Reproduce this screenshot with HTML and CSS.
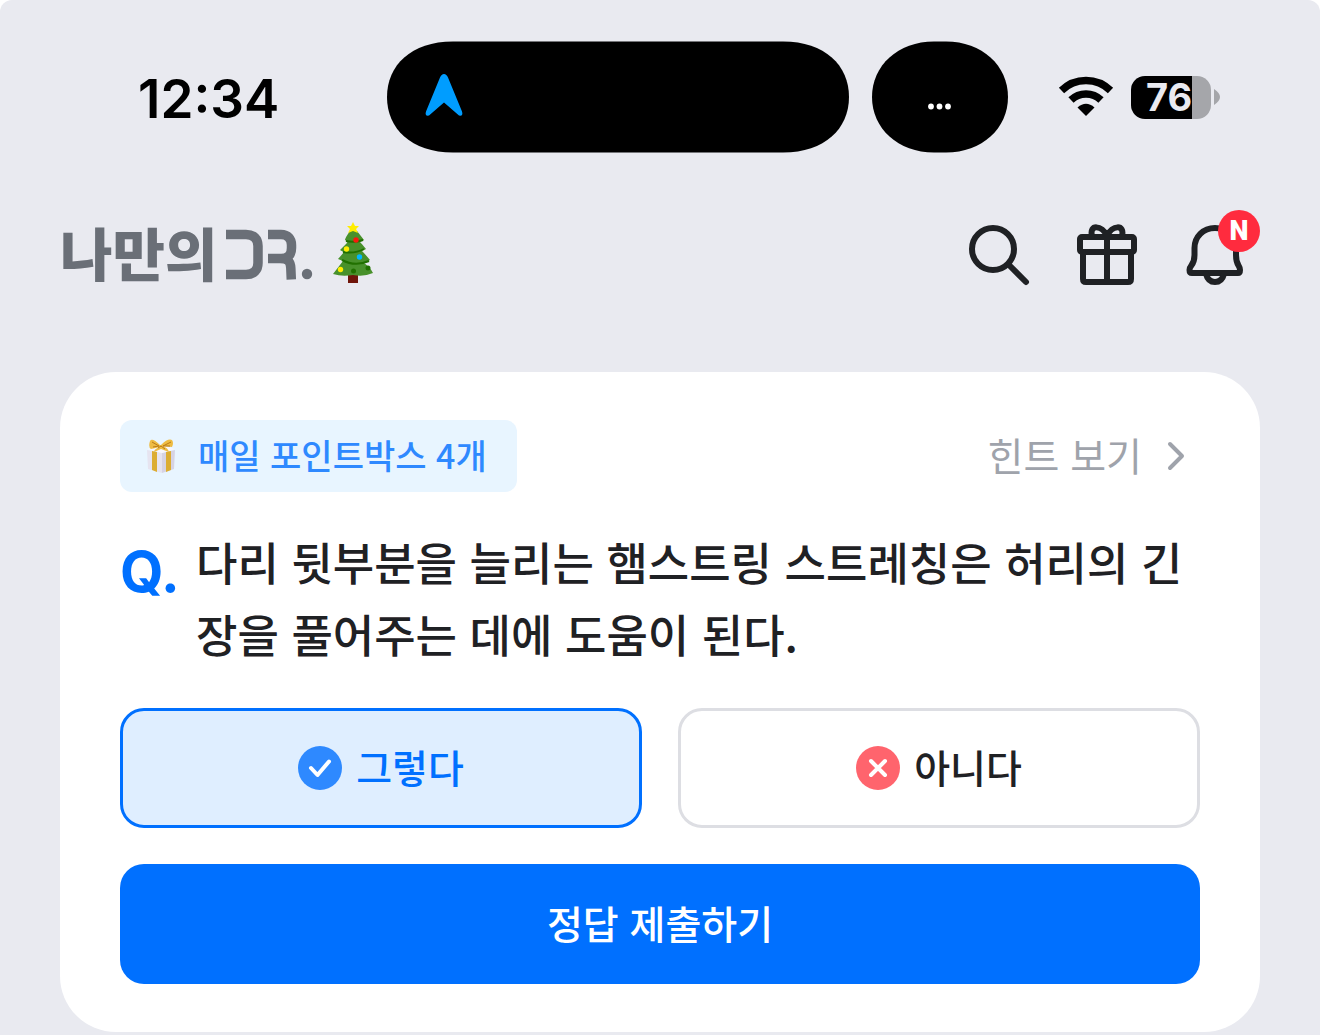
FILE: index.html
```html
<!DOCTYPE html>
<html lang="ko">
<head>
<meta charset="utf-8">
<meta name="viewport" content="width=device-width, initial-scale=1">
<title>나만의DR.</title>
<link rel="stylesheet" href="styles.css">
</head>
<body>
<div class="screen">
  <div class="status">
    <time class="clock">12:34</time>
    <div class="islands">
      <svg class="island-main" viewBox="0 0 462 111" aria-hidden="true">
        <path d="M66 0H396C438 0 462 24 462 55.500S438 111 396 111H66C24 111 0 87 0 55.500S24 0 66 0Z"/>
        <path fill="#009dff" d="M53 36Q54.500 32.500 57 32.500T61 36L75 70Q76.500 75 72 74L57 61L42 74Q37.500 75 39 70Z"/>
      </svg>
      <svg class="island-side" viewBox="0 0 136 111" role="img" aria-label="더보기">
        <path d="M62 0H74C110 0 136 24 136 55.500S110 111 74 111H62C26 111 0 87 0 55.500S26 0 62 0Z"/>
        <g fill="#fff"><circle cx="59" cy="65" r="2.900"/><circle cx="67.500" cy="65" r="2.900"/><circle cx="76" cy="65" r="2.900"/></g>
      </svg>
    </div>
    <div class="signals">
      <svg class="wifi" viewBox="0 0 56 42" role="img" aria-label="Wi-Fi">
        <g fill="none" stroke="#000" stroke-width="7.500">
          <path d="M3.500 14.500A35 35 0 0 1 52.500 14.500"/>
          <path d="M13 24A21.500 21.500 0 0 1 43 24"/>
        </g>
        <path d="M19.500 31.500Q28 24 36.500 31.500L28 40Z"/>
      </svg>
      <div class="battery"><span class="level">76</span></div>
      <svg class="cap" viewBox="0 0 6 16" aria-hidden="true"><path fill="#a5a6aa" d="M0 0Q6 4 6 8T0 16Z"/></svg>
    </div>
  </div>

  <header class="header">
    <a class="brand" href="#" aria-label="나만의DR. 홈">
      <span class="brand-name">나만의</span>
      <svg class="brand-mark" viewBox="0 0 90 54" aria-hidden="true">
        <g fill="none" stroke="#6a6f77" stroke-width="9.500">
          <path d="M1 6.500H21C29 6.500 33 11 33 18V35C33 42 29 46.500 21 46.500H1"/>
          <path d="M43 6.500H56C63 6.500 66.500 11 66.500 17V20C66.500 27 63 30.500 56 30.500H43M55 30.500C63 30.500 65.500 33 65.800 40L66.300 51.500"/>
        </g>
        <circle cx="82" cy="46" r="5.200" fill="#6a6f77"/>
      </svg>
      <svg class="tree" viewBox="0 0 42 62" aria-hidden="true">
        <path fill="#70150a" d="M15 51H25V61H15Z"/>
        <path fill="#48912b" d="M17 9Q12 16 12 18Q16 20 13 22L7 28Q10 30 11 30Q7 35 5 37L10 39L0 52Q9 55 20 53Q31 55 40 51Q37 45 31 41L37 38Q32 32 29 29L33 27Q29 22 27 20L31 18L24 9Z"/>
        <g fill="none" stroke="#217000" stroke-width="2"><path d="M13 19Q21 21 30 18"/><path d="M10 30Q22 32 31 27"/><path d="M9 38Q22 45 36 39"/></g>
        <path fill="#ffed00" d="M20 0L22 4H26L23 7L25 11L20 9L15 11L17 7L14 4H18Z"/>
        <circle cx="23" cy="18" r="2.700" fill="#f71b0d"/><circle cx="13.500" cy="27" r="2.700" fill="#ffed00"/>
        <circle cx="26.500" cy="35" r="2.700" fill="#00b7ff"/><circle cx="7.500" cy="47.500" r="2.700" fill="#ffed00"/>
        <circle cx="20.500" cy="49" r="2.500" fill="#217000"/><circle cx="35" cy="46" r="2.500" fill="#217000"/>
      </svg>
    </a>
    <nav class="actions" aria-label="바로가기">
      <button class="icon-button" type="button" aria-label="검색">
        <svg viewBox="0 0 72 72"><circle cx="30" cy="30" r="21"/><path d="M46 46L63 63"/></svg>
      </button>
      <button class="icon-button" type="button" aria-label="선물">
        <svg viewBox="0 0 72 72"><rect x="9" y="18" width="54" height="15" rx="2"/><path d="M12 33V60Q12 63 15 63H57Q60 63 60 60V33M36 18V63M21 17C18 5 31 6 36 17C41 6 54 5 51 17"/></svg>
      </button>
      <button class="icon-button" type="button" aria-label="새 알림">
        <svg viewBox="0 0 72 72"><path d="M36 9C24 9 15.500 18 15.500 29V36C15.500 47 10.500 46 10.500 51Q10.500 54 13 54H59Q61 54 61 51C61 46 57 47 57 36V29C57 18 48 9 36 9Z"/><path d="M27 55Q29 63 36 63T45 55"/></svg>
        <span class="badge">N</span>
      </button>
    </nav>
  </header>

  <main class="card">
    <div class="card-top">
      <div class="chip">
        <svg class="gift" viewBox="0 0 30 36" aria-hidden="true">
          <path fill="#e6e4f0" d="M1 12L16 15V35L2 31Z"/><path fill="#d6d3e3" d="M16 15L29 12L28 31L16 35Z"/>
          <path fill="#f8f7fc" d="M1 11L15 7L29 11L16 15Z"/>
          <path fill="#dcad32" d="M6 13L11 14V34L6 32ZM20 14L25 13V32L20 34Z"/>
          <path fill="#eebc43" d="M14 7Q6-1 4 3Q2 9 5 11L14 9Q8 11 8 14L15 11L23 14Q22 10 17 8L26 9Q28 5 26 2Q22 0 15 7Z"/>
          <path fill="none" stroke="#b97b16" d="M6 4L13 8L7 9M25 4L17 8L24 8M12 10L15 8L19 11"/>
        </svg>
        <span class="label">매일 포인트박스 4개</span>
      </div>
      <a class="hint" href="#">
        <span class="label">힌트 보기</span>
        <svg class="chevron" viewBox="0 0 20 32" aria-hidden="true"><path d="M4 4L16 16L4 28"/></svg>
      </a>
    </div>
    <form class="quiz">
      <div class="question">
        <span class="q">Q.</span>
        <p class="question-text">다리 뒷부분을 늘리는 햄스트링 스트레칭은 허리의 긴장을 풀어주는 데에 도움이 된다.</p>
      </div>
      <div class="options">
        <button class="option selected" type="button" aria-pressed="true">
          <svg viewBox="0 0 44 44" aria-hidden="true"><circle cx="22" cy="22" r="22" fill="#2e89ff"/><path d="M13 22L19.500 29L31 15.500"/></svg>
          <span class="label">그렇다</span>
        </button>
        <button class="option" type="button" aria-pressed="false">
          <svg viewBox="0 0 44 44" aria-hidden="true"><circle cx="22" cy="22" r="22" fill="#ff646d"/><path d="M15 15L29 29M29 15L15 29"/></svg>
          <span class="label">아니다</span>
        </button>
      </div>
      <button class="submit" type="submit"><span class="label">정답 제출하기</span></button>
    </form>
  </main>
</div>
</body>
</html>
```
FILE: styles.css
```css
* { box-sizing: border-box; }

body {
  margin: 0;
  background: #fff;
  font-family: "Noto Sans CJK KR", sans-serif;
  font-weight: 500;
  color: #1f2124;
}

button {
  font: inherit;
  color: inherit;
  padding: 0;
  border: 0;
  background: none;
}

a { color: inherit; text-decoration: none; }
svg { display: block; flex: none; }

.screen {
  min-height: 100vh;
  padding-bottom: 3px;
  background: #e9eaf0;
  border-radius: 12px 12px 0 0;
}

.status {
  display: grid;
  grid-template-columns: 1fr auto 1fr;
  align-items: center;
  padding: 41px 37px 0 112px;
}

.clock {
  padding: 4px 0 0 26px;
  font: 600 53px/64px Inter, sans-serif;
  color: #000;
}

.islands { display: flex; gap: 23px; }
.island-main { width: 462px; height: 112px; }
.island-side { width: 136px; height: 112px; }

.signals { display: flex; align-items: center; padding-left: 50px; }
.wifi { width: 56px; height: 42px; }

.battery {
  width: 80px;
  height: 43px;
  margin-left: 17px;
  border-radius: 14px;
  background: linear-gradient(90deg, #000 61px, #a5a6aa 61px);
}

.level {
  display: block;
  padding-left: 15px;
  font: 700 38px/43px Inter, sans-serif;
  color: #e9eaf0;
}

.cap { width: 6px; height: 16px; margin-left: 3px; }

.header {
  display: flex;
  justify-content: space-between;
  align-items: center;
  padding: 66px 69px 0 60px;
}

.brand { display: flex; align-items: center; color: #6a6f77; }
.brand-name { padding-bottom: 8px; font-size: 57px; font-weight: 900; line-height: 64px; }
.brand-mark { width: 90px; height: 54px; margin-left: 8px; }
.tree { width: 42px; height: 62px; margin: 0 0 4px 18px; }

.actions { display: flex; gap: 36px; }
.icon-button { position: relative; width: 72px; height: 72px; }

.icon-button svg {
  width: 72px;
  height: 72px;
  fill: none;
  stroke: #1f2124;
  stroke-width: 6;
  stroke-linecap: round;
  stroke-linejoin: round;
}

.badge {
  position: absolute;
  top: -9px;
  right: -9px;
  width: 42px;
  height: 42px;
  border-radius: 50%;
  background: #ff2b3e;
  font: 900 27px/42px Roboto, sans-serif;
  text-align: center;
  color: #fff;
}

.card {
  margin: 81px 60px 0;
  padding: 48px 60px;
  border-radius: 56px;
  background: #fff;
}

.card-top { display: flex; justify-content: space-between; align-items: center; }

.label { padding-bottom: 4px; }

.chip {
  display: flex;
  align-items: center;
  gap: 22px;
  height: 72px;
  padding: 0 30px 0 26px;
  border-radius: 12px;
  background: #e8f5ff;
  font-size: 34px;
  color: #2e89ff;
}

.gift { width: 30px; height: 36px; }

.hint {
  display: flex;
  align-items: center;
  gap: 24px;
  padding-right: 14px;
  font-size: 39px;
  font-weight: 400;
  line-height: 68px;
  color: #9fa3ab;
}

.chevron {
  width: 20px;
  height: 32px;
  fill: none;
  stroke: #9fa3ab;
  stroke-width: 4;
  stroke-linecap: round;
  stroke-linejoin: round;
}

.question { display: flex; gap: 20px; padding-top: 34px; }
.q { width: 56px; font: 700 56px/92px Inter, sans-serif; color: #0070ff; }
.question-text { flex: 1; margin: 0; font-size: 45px; line-height: 72px; }

.options {
  display: grid;
  grid-template-columns: 1fr 1fr;
  gap: 36px;
  padding: 38px 0 36px;
}

.option {
  display: flex;
  justify-content: center;
  align-items: center;
  gap: 14px;
  height: 120px;
  border: 3px solid #dddee3;
  border-radius: 24px;
  background: #fff;
  font-size: 39px;
}

.option.selected { border-color: #0070ff; background: #dfeeff; color: #0070ff; }

.option svg {
  width: 44px;
  height: 44px;
  fill: none;
  stroke: #fff;
  stroke-width: 4;
  stroke-linecap: round;
  stroke-linejoin: round;
}

.option circle { stroke: none; }

.submit {
  display: flex;
  justify-content: center;
  align-items: center;
  width: 100%;
  height: 120px;
  border-radius: 24px;
  background: #0070ff;
  font-size: 39px;
  color: #fff;
}
```
